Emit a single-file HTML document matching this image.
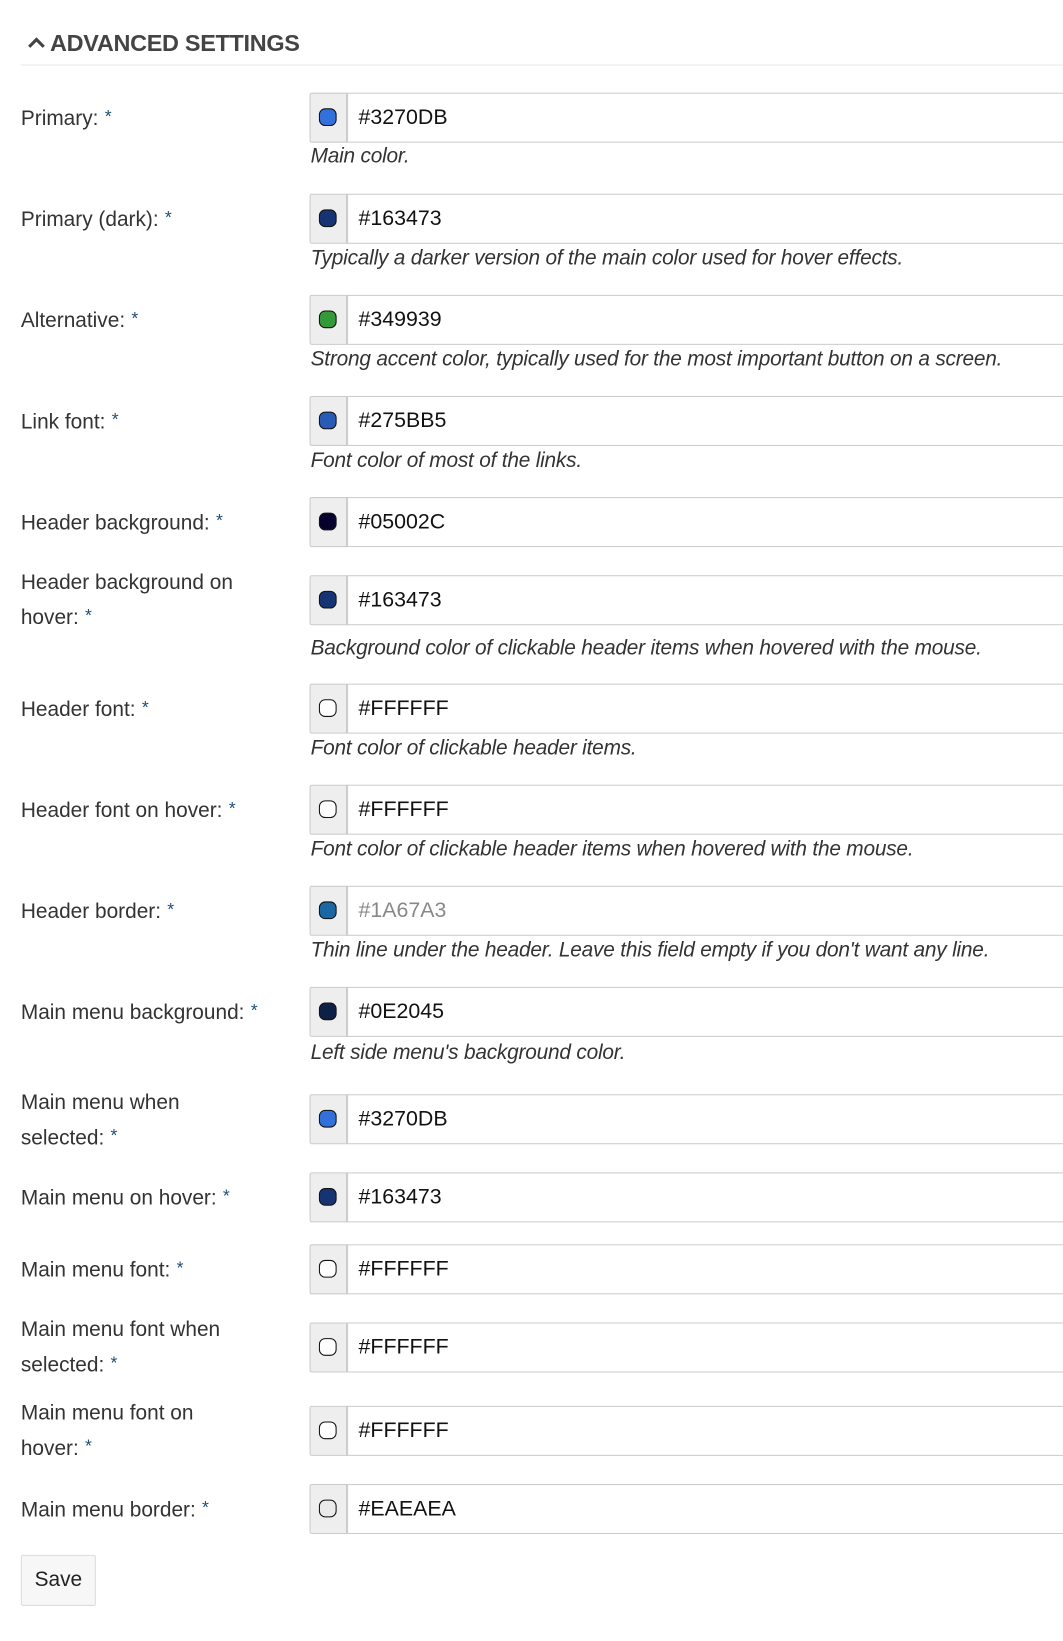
<!DOCTYPE html>
<html><head><meta charset="utf-8"><style>
html,body{margin:0;padding:0;background:#fff;width:1063px;height:1639px;overflow:hidden}
#w{position:absolute;left:0;top:2px;width:1020px;height:1573px;transform:scale(1.0422);transform-origin:0 0;font-family:"Liberation Sans",sans-serif;color:#333}
.h{position:absolute;left:26px;top:27px;font-size:22.5px;font-weight:bold;color:#444;letter-spacing:-0.3px}
.hl{position:absolute;left:20px;top:60px;width:1000px;height:1px;background:#e8e8e8}
.lab{position:absolute;left:20px;font-size:20px;line-height:31px;color:#333}
.lab b{font-weight:normal;color:#1f4e79;margin-left:6px;font-size:17px;vertical-align:3px}
.g{position:absolute;left:297px;width:730px;height:48px}
.sw{position:absolute;left:0;top:0;width:34px;height:46px;border:1px solid #ccc;background:#eee;border-radius:2px 0 0 2px}
.sw i{position:absolute;left:8px;top:14px;width:17px;height:17px;border:1px solid #111;border-radius:6px;box-sizing:border-box}
.in{position:absolute;left:36px;top:0;right:0;height:46px;border:1px solid #ccc;border-right:none;line-height:46px;padding-left:10px;font-size:20.5px;color:#111}
.ph{color:#888}
.hp{position:absolute;left:298px;font-size:20px;font-style:italic;color:#333;line-height:24px;letter-spacing:-0.2px}
.save{position:absolute;left:20px;top:1490px;width:70px;height:47px;border:1px solid #ddd;background:#f7f7f7;border-radius:2px;font-size:20px;line-height:47px;text-align:center;color:#222}
</style></head><body><div id="w">
<div class="h"><svg width="18" height="14" viewBox="0 0 18 14" style="vertical-align:1px;margin-right:4px"><path d="M2 11 L9 4 L16 11" fill="none" stroke="#444" stroke-width="3"/></svg>ADVANCED SETTINGS</div>
<div class="hl"></div>

<div class="lab" style="top:94px">Primary:<b>*</b></div>
<div class="g" style="top:87px"><div class="sw"><i style="background:#3270DB"></i></div><div class="in">#3270DB</div></div>
<div class="hp" style="top:136px">Main color.</div>

<div class="lab" style="top:191px">Primary (dark):<b>*</b></div>
<div class="g" style="top:184px"><div class="sw"><i style="background:#163473"></i></div><div class="in">#163473</div></div>
<div class="hp" style="top:234px">Typically a darker version of the main color used for hover effects.</div>

<div class="lab" style="top:288px">Alternative:<b>*</b></div>
<div class="g" style="top:281px"><div class="sw"><i style="background:#349939"></i></div><div class="in">#349939</div></div>
<div class="hp" style="top:331px">Strong accent color, typically used for the most important button on a screen.</div>

<div class="lab" style="top:385px">Link font:<b>*</b></div>
<div class="g" style="top:378px"><div class="sw"><i style="background:#275BB5"></i></div><div class="in">#275BB5</div></div>
<div class="hp" style="top:428px">Font color of most of the links.</div>

<div class="lab" style="top:482px">Header background:<b>*</b></div>
<div class="g" style="top:475px"><div class="sw"><i style="background:#05002C"></i></div><div class="in">#05002C</div></div>

<div class="lab" style="top:542px">Header background on<br>hover:<b>*</b></div>
<div class="g" style="top:550px"><div class="sw"><i style="background:#163473"></i></div><div class="in">#163473</div></div>
<div class="hp" style="top:608px">Background color of clickable header items when hovered with the mouse.</div>

<div class="lab" style="top:661px">Header font:<b>*</b></div>
<div class="g" style="top:654px"><div class="sw"><i style="background:#fff"></i></div><div class="in">#FFFFFF</div></div>
<div class="hp" style="top:704px">Font color of clickable header items.</div>

<div class="lab" style="top:758px">Header font on hover:<b>*</b></div>
<div class="g" style="top:751px"><div class="sw"><i style="background:#fff"></i></div><div class="in">#FFFFFF</div></div>
<div class="hp" style="top:801px">Font color of clickable header items when hovered with the mouse.</div>

<div class="lab" style="top:855px">Header border:<b>*</b></div>
<div class="g" style="top:848px"><div class="sw"><i style="background:#1A67A3"></i></div><div class="in ph">#1A67A3</div></div>
<div class="hp" style="top:898px">Thin line under the header. Leave this field empty if you don't want any line.</div>

<div class="lab" style="top:952px">Main menu background:<b>*</b></div>
<div class="g" style="top:945px"><div class="sw"><i style="background:#0E2045"></i></div><div class="in">#0E2045</div></div>
<div class="hp" style="top:996px">Left side menu's background color.</div>

<div class="lab" style="top:1041px">Main menu when<br>selected:<b>*</b></div>
<div class="g" style="top:1048px"><div class="sw"><i style="background:#3270DB"></i></div><div class="in">#3270DB</div></div>

<div class="lab" style="top:1130px">Main menu on hover:<b>*</b></div>
<div class="g" style="top:1123px"><div class="sw"><i style="background:#163473"></i></div><div class="in">#163473</div></div>

<div class="lab" style="top:1199px">Main menu font:<b>*</b></div>
<div class="g" style="top:1192px"><div class="sw"><i style="background:#fff"></i></div><div class="in">#FFFFFF</div></div>

<div class="lab" style="top:1259px">Main menu font when<br>selected:<b>*</b></div>
<div class="g" style="top:1267px"><div class="sw"><i style="background:#fff"></i></div><div class="in">#FFFFFF</div></div>

<div class="lab" style="top:1339px">Main menu font on<br>hover:<b>*</b></div>
<div class="g" style="top:1347px"><div class="sw"><i style="background:#fff"></i></div><div class="in">#FFFFFF</div></div>

<div class="lab" style="top:1429px">Main menu border:<b>*</b></div>
<div class="g" style="top:1422px"><div class="sw"><i style="background:#EAEAEA"></i></div><div class="in">#EAEAEA</div></div>

<div class="save">Save</div>
</div></body></html>
